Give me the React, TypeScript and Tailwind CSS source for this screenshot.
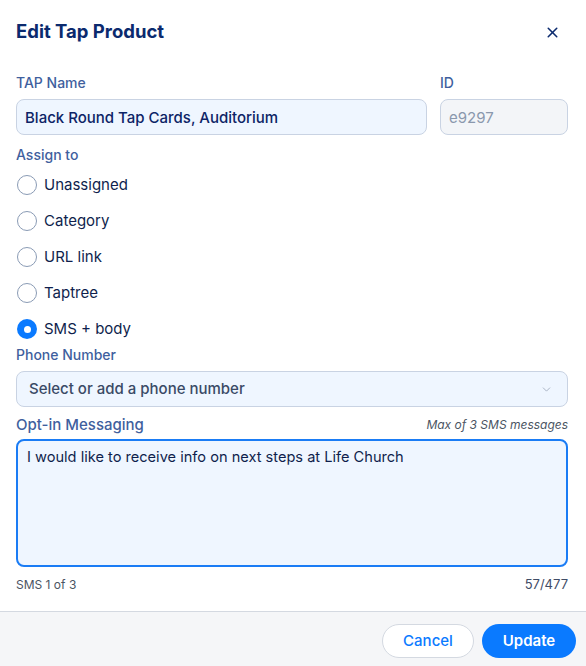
import { useState } from "react";
import { X, ChevronDown } from "lucide-react";

const options = ["Unassigned", "Category", "URL link", "Taptree", "SMS + body"];

export default function App() {
  const [assign, setAssign] = useState("SMS + body");
  const [message, setMessage] = useState("I would like to receive info on next steps at Life Church");

  return (
    <div className="w-[586px] h-[666px] bg-white flex flex-col font-['Inter',sans-serif] text-[#0f2a66]">
      <div className="flex-1 pl-4 pr-[18px]">
        <div className="flex items-center justify-between pt-[20px] h-[44px]">
          <h2 className="text-[18.5px] font-bold text-[#0b2a6e]">Edit Tap Product</h2>
          <button className="mr-[7px] text-[#0b2a6e]">
            <X size={17} strokeWidth={2.2} />
          </button>
        </div>

        <div className="flex gap-[13px] mt-[29px]">
          <div className="flex-1 flex flex-col">
            <label className="text-sm font-medium leading-5 text-[#3f5f9e]">TAP Name</label>
            <input
              defaultValue="Black Round Tap Cards, Auditorium"
              className="mt-1.5 h-9 rounded-lg border border-[#c9d3e3] bg-[#eff6ff] px-[8px] text-[15px] font-medium text-[#0d2466] outline-none"
            />
          </div>
          <div className="w-[128px] flex flex-col">
            <label className="text-sm font-medium leading-5 text-[#3f5f9e]">ID</label>
            <input
              defaultValue="e9297"
              disabled
              className="mt-1.5 h-9 rounded-lg border border-[#c9d3e3] bg-[#f3f5f8] px-[8px] text-[15px] text-[#8a98ad] outline-none"
            />
          </div>
        </div>

        <div className="mt-[10px] text-sm font-medium leading-5 text-[#3f5f9e]">Assign to</div>
        <div className="mt-[10px] flex flex-col gap-4">
          {options.map((o) => (
            <label key={o} className="flex items-center gap-[7px] h-5 cursor-pointer" onClick={() => setAssign(o)}>
              {assign === o ? (
                <span className="ml-px w-5 h-5 rounded-full bg-[#0a7aff] flex items-center justify-center">
                  <span className="w-[7px] h-[7px] rounded-full bg-white" />
                </span>
              ) : (
                <span className="ml-px w-5 h-5 rounded-full border-[1.5px] border-[#8a9bb5] bg-white" />
              )}
              <span className="text-[15px] text-[#0f1f4d]">{o}</span>
            </label>
          ))}
        </div>

        <div className="mt-[6px] text-sm font-medium leading-5 text-[#3f5f9e]">Phone Number</div>
        <button className="mt-1.5 w-full h-9 rounded-lg border border-[#c9d3e3] bg-[#eff6ff] pl-3 pr-[14px] flex items-center justify-between">
          <span className="text-[15px] font-medium text-[#3a4a66]">Select or add a phone number</span>
          <ChevronDown size={13} className="text-[#9aa5b8]" strokeWidth={1.5} />
        </button>

        <div className="mt-2 flex items-center justify-between">
          <span className="text-[15px] font-medium leading-5 text-[#3f5f9e]">Opt-in Messaging</span>
          <span className="text-xs italic text-[#4b5563]">Max of 3 SMS messages</span>
        </div>
        <textarea
          value={message}
          onChange={(e) => setMessage(e.target.value)}
          className="mt-1 w-full h-[128px] resize-none rounded-lg border-2 border-[#1a7cf5] bg-[#eff6ff] px-[9px] py-[6px] text-[14.6px] text-[#0f1f4d] outline-none"
        />
        <div className="mt-[3px] flex items-center justify-between text-xs text-[#4b5563]">
          <span>SMS 1 of 3</span>
          <span className="text-[13px] text-[#3f4c66]">{message.length}/477</span>
        </div>
      </div>

      <div className="h-[55px] border-t border-[#d4d9e1] bg-[#f5f6f8] flex items-center justify-end gap-2 pr-[10px] pt-1">
        <button className="h-[34px] w-[92px] rounded-full border border-[#d4d9e1] bg-white text-[15px] font-medium text-[#0a7aff]">
          Cancel
        </button>
        <button className="h-[34px] w-[94px] rounded-full bg-[#0a7aff] text-[15px] font-semibold text-white">
          Update
        </button>
      </div>
    </div>
  );
}
